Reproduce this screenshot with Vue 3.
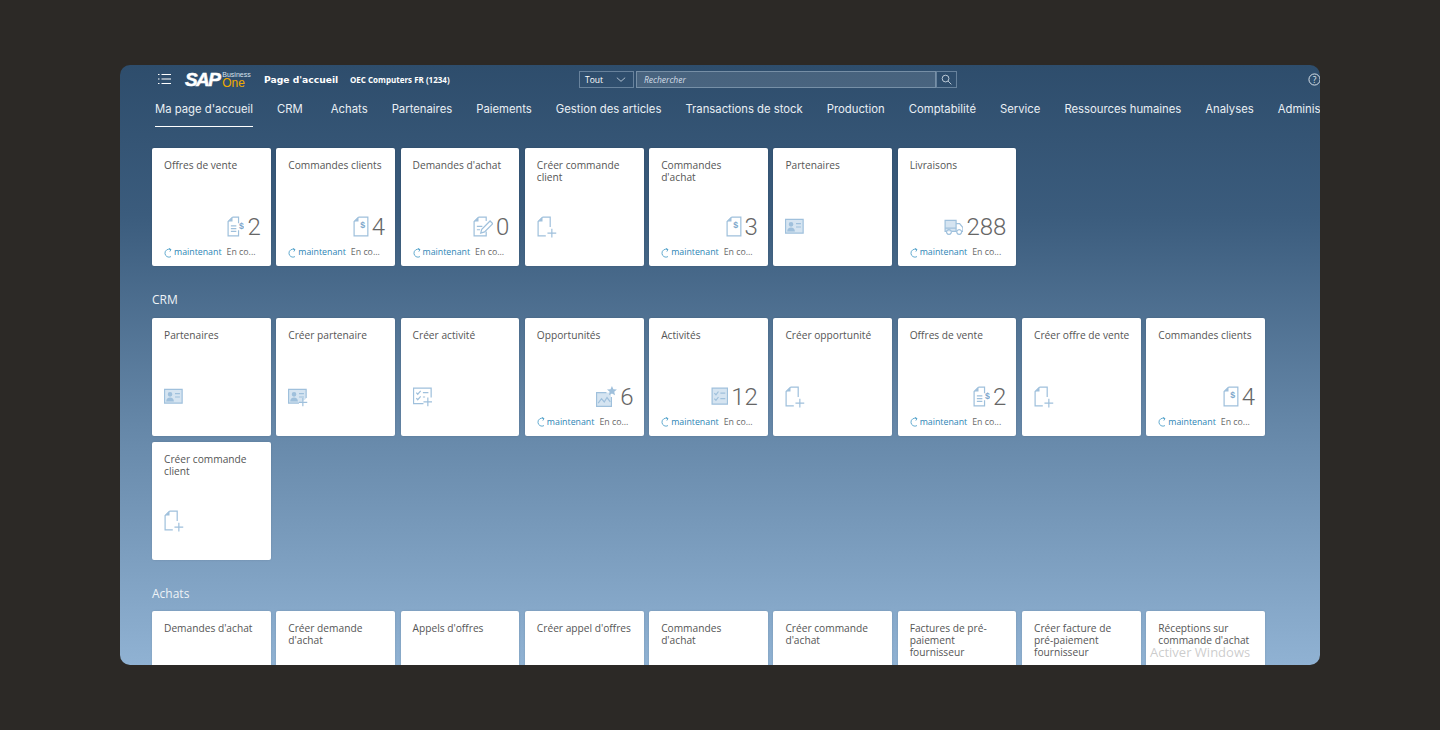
<script setup>
const navItems = [
  "Ma page d'accueil", 'CRM', 'Achats', 'Partenaires', 'Paiements', 'Gestion des articles',
  'Transactions de stock', 'Production', 'Comptabilité', 'Service', 'Ressources humaines',
  'Analyses', 'Administration',
]

// tile icons in a 20 high box: w = box width, b = pale background, f = solid parts, s = outlines, t = $ position
const icons = {
  quote: {
    w: 15.500,
    s: ['M5 1h5.500v5.500M10.500 13v5H1V5L5 1', 'M3.500 9h5M3.500 11.500h5M3.500 14h5'],
    f: ['M5 1v4H1z'],
    t: [11, 11.500],
  },
  order: {
    w: 14,
    s: ['M5 1h8.500v17H1V5L5 1'],
    f: ['M5 1v4H1z'],
    t: [6.500, 10.500],
  },
  request: {
    w: 18.500,
    s: ['M5 1h7v3.500M12 14v4H1V5L5 1', 'M3.500 9.500h5M3.500 12.500h3', 'M7 15.500l1-3.500 7.500-7.500 2.500 2.500-7.500 7.500z'],
    f: ['M5 1v4H1z'],
  },
  create: {
    w: 18,
    s: ['M5 1h7v9M8 18H1V5L5 1', 'M13.500 11.500v8M9.500 15.500h8'],
    f: ['M5 1v4H1z'],
  },
  card: {
    w: 17,
    b: ['M.5 3h16v12.500H.5z'],
    s: ['M.5 3h16v12.500H.5z', 'M10 7h4.500M10 10h4.500'],
    f: ['M5.500 5.500a2 2 0 0 1 0 4.200a2 2 0 0 1 0-4.200zM2 14c0-2 1.500-3.500 3.500-3.500S9 12 9 14z'],
  },
  cardAdd: {
    w: 18,
    b: ['M.5 3h16v8.500l-5.500 4H.5z'],
    s: ['M10 15.500H.5V3h16v8', 'M10 7h4.500M10 10h4.500', 'M13.500 11v7.500M10 14.800h7.500'],
    f: ['M5.500 5.500a2 2 0 0 1 0 4.200a2 2 0 0 1 0-4.200zM2 14c0-2 1.500-3.500 3.500-3.500S9 12 9 14z'],
  },
  taskAdd: {
    w: 18,
    s: ['M9.500 16H.5V2h16v8.500', 'M9 6h5M9 10h2', 'M3 6l1.300 1.500L7 4.500M3 11l1.300 1.500L7 9.500', 'M13.500 10.500v8M9.500 14.500h8'],
  },
  chart: {
    w: 19,
    b: ['M.5 6h13v12.500H.5z'],
    s: ['M9.500 6H.5v12.500h13.500V10', 'M2 15.500l3-4 2.500 3 2.500-4 3 4'],
    f: ['M14.500 0l1.300 2.900 3.200.3-2.400 2.100.7 3.100-2.800-1.600-2.800 1.600.7-3.100-2.400-2.100 3.200-.3z'],
  },
  tasks: {
    w: 16,
    b: ['M1 2h14v14.500H1z'],
    s: ['M1 2h14v14.500H1z', 'M8.500 6.500h4.500M8.500 11.500h4.500', 'M3 6.500l1.500 1.500 2.300-3M3 11.500l1.500 1.500 2.300-3'],
  },
  truck: {
    w: 18,
    b: ['M1 4h10v10H1z'],
    s: ['M2 14H1V4h10v10H7', 'M11 7h3.200l3 3.500V14h-1M11 14h.5', 'M1 11h10', 'M4.500 12.300a2.200 2.200 0 1 0 .01 0zM13.800 12.300a2.200 2.200 0 1 0 .01 0z'],
  },
}

const home = [
  { title: 'Offres de vente', icon: 'quote', value: 2 },
  { title: 'Commandes clients', icon: 'order', value: 4 },
  { title: "Demandes d'achat", icon: 'request', value: 0 },
  { title: 'Créer commande client', icon: 'create' },
  { title: "Commandes d'achat", icon: 'order', value: 3 },
  { title: 'Partenaires', icon: 'card' },
  { title: 'Livraisons', icon: 'truck', value: 288 },
]

const crm = [
  { title: 'Partenaires', icon: 'card' },
  { title: 'Créer partenaire', icon: 'cardAdd' },
  { title: 'Créer activité', icon: 'taskAdd' },
  { title: 'Opportunités', icon: 'chart', value: 6 },
  { title: 'Activités', icon: 'tasks', value: 12 },
  { title: 'Créer opportunité', icon: 'create' },
  { title: 'Offres de vente', icon: 'quote', value: 2 },
  { title: 'Créer offre de vente', icon: 'create' },
  { title: 'Commandes clients', icon: 'order', value: 4 },
  { title: 'Créer commande client', icon: 'create' },
]

const achats = [
  { title: "Demandes d'achat" },
  { title: "Créer demande d'achat" },
  { title: "Appels d'offres" },
  { title: "Créer appel d'offres" },
  { title: "Commandes d'achat" },
  { title: "Créer commande d'achat" },
  { title: 'Factures de pré-paiement fournisseur' },
  { title: 'Créer facture de pré-paiement fournisseur' },
  { title: "Réceptions sur commande d'achat" },
]

const sections = [
  { name: '', tiles: home },
  { name: 'CRM', tiles: crm },
  { name: 'Achats', tiles: achats },
]
</script>

<template>
  <div class="frame">
    <header class="topbar">
      <svg class="menu-icon" viewBox="0 0 14 12">
        <path d="M0 1.500h1.500M0 6h1.500M0 10.500h1.500M3.500 1.500H13M3.500 6H13M3.500 10.500H13" />
      </svg>
      <div class="logo">
        <span class="logo-sap">SAP</span>
        <span class="logo-product"><small>Business</small><b>One</b></span>
      </div>
      <span class="page-title">Page d'accueil</span>
      <span class="company">OEC Computers FR (1234)</span>
      <div class="search">
        <div class="scope">
          <span>Tout</span>
          <svg viewBox="0 0 12 6"><path d="M1 .8l5 4.400 5-4.400" /></svg>
        </div>
        <div class="search-input">Rechercher</div>
        <div class="search-btn">
          <svg viewBox="0 0 14 14"><circle cx="5.800" cy="5.800" r="4.300" /><path d="M9 9l4.200 4.200" /></svg>
        </div>
      </div>
      <svg class="help" viewBox="0 0 14 14">
        <circle cx="7" cy="7" r="6" />
        <text x="7" y="10.300" text-anchor="middle">?</text>
      </svg>
    </header>

    <nav class="nav">
      <a v-for="(item, i) in navItems" :key="item" :class="{ active: i === 0 }">{{ item }}</a>
    </nav>

    <main class="content">
      <section v-for="section in sections" :key="section.name" class="section">
        <h2 v-if="section.name">{{ section.name }}</h2>
        <div class="tiles">
          <div v-for="tile in section.tiles" :key="tile.title" class="tile">
            <div class="tile-title">{{ tile.title }}</div>
            <div v-if="tile.icon" class="tile-body" :class="{ kpi: tile.value !== undefined }">
              <svg
                class="tile-icon"
                :viewBox="`0 0 ${icons[tile.icon].w} 20`"
                :style="{ width: icons[tile.icon].w * 1.1 + 'px' }"
              >
                <path v-for="d in icons[tile.icon].b" :key="d" class="pale" :d="d" />
                <path v-for="d in icons[tile.icon].f" :key="d" class="solid" :d="d" />
                <path v-for="d in icons[tile.icon].s" :key="d" :d="d" />
                <text v-if="icons[tile.icon].t" :x="icons[tile.icon].t[0]" :y="icons[tile.icon].t[1]">$</text>
              </svg>
              <span v-if="tile.value !== undefined" class="tile-value">{{ tile.value }}</span>
            </div>
            <div v-if="tile.value !== undefined" class="tile-foot">
              <svg viewBox="0 0 10 10"><path d="M7.800 1.600A4 4 0 1 0 8 8.600M6 .4l2 1.200-1.200 2" /></svg>
              <span class="now">maintenant</span>
              <span class="status">En co...</span>
            </div>
          </div>
        </div>
      </section>
    </main>

    <div class="watermark">
      <div>Activer Windows</div>
      <small>Accédez aux paramètres</small>
    </div>
  </div>
</template>

<style>
html,
body {
  margin: 0;
  background: #2c2926;
}
</style>

<style scoped>
.frame {
  position: relative;
  width: 1200px;
  height: 600px;
  margin: 65px 120px;
  border-radius: 10px;
  overflow: hidden;
  background: linear-gradient(#2e4d6c 0%, #3b5c7d 25%, #6587a8 60%, #90b2d3 100%);
  font-family: 'Open Sans', 'Noto Sans', sans-serif;
  color: #fff;
}

.topbar {
  display: flex;
  align-items: center;
  height: 28px;
  padding-left: 38px;
}

.menu-icon {
  width: 14px;
  height: 12px;
  fill: none;
  stroke: #fff;
  stroke-width: 1.2;
}

.logo {
  display: flex;
  align-items: center;
  margin-left: 13px;
  width: 79px;
}

.logo-sap {
  font: italic bold 19px/1 'Liberation Sans', sans-serif;
  letter-spacing: -1.600px;
  -webkit-text-stroke: 0.5px #fff;
}

.logo-product {
  display: flex;
  flex-direction: column;
  margin-left: 3px;
  line-height: 1;
}

.logo-product small {
  font: 7px/7px 'Liberation Sans', sans-serif;
  color: #d8e2ec;
}

.logo-product b {
  font: 12px/10px 'Liberation Sans', sans-serif;
  color: #f0ab00;
}

.page-title {
  font-family: 'DejaVu Sans', sans-serif;
  font-size: 9.200px;
  font-weight: 700;
  width: 86px;
  white-space: nowrap;
}

.company {
  font-size: 8px;
  font-weight: 700;
  width: 229px;
  white-space: nowrap;
}

.search {
  display: flex;
  height: 17px;
  font-size: 8.500px;
}

.scope,
.search-input,
.search-btn {
  display: flex;
  align-items: center;
  box-sizing: border-box;
  border: 1px solid rgba(190, 210, 228, 0.4);
}

.scope {
  width: 55px;
  justify-content: space-between;
  padding: 0 7px 0 5px;
}

.scope svg {
  width: 10px;
  height: 5px;
  fill: none;
  stroke: #c9d6e2;
}

.search-input {
  width: 300px;
  margin-left: 2px;
  padding-left: 7px;
  background: rgba(255, 255, 255, 0.12);
  font-style: italic;
  color: #d4dee8;
}

.search-btn {
  width: 21px;
  justify-content: center;
}

.search-btn svg {
  width: 11px;
  height: 11px;
  fill: none;
  stroke: #dfe8f0;
}

.help {
  width: 13px;
  height: 13px;
  margin-left: auto;
  margin-right: -1px;
  fill: none;
  stroke: #e6edf3;
  stroke-width: 1;
}

.help text {
  fill: #e6edf3;
  stroke: none;
  font-size: 9px;
}

.nav {
  display: flex;
  gap: 24px;
  padding-left: 35px;
  height: 34px;
  white-space: nowrap;
}

.nav a {
  box-sizing: border-box;
  height: 34px;
  padding-top: 9px;
  font-family: Inter, sans-serif;
  font-size: 11.300px;
  color: #e9eff4;
}

.nav a:nth-child(2) {
  margin-right: 4px;
}

.nav a.active {
  border-bottom: 1.500px solid #fff;
}

.content {
  padding: 21px 0 0 32px;
}

.section {
  margin-bottom: 25px;
}

.section h2 {
  margin: 0 0 9.500px;
  font-size: 12px;
  line-height: 17px;
  font-weight: 400;
  color: #eef3f7;
}

.tiles {
  display: grid;
  grid-template-columns: repeat(9, 118.700px);
  gap: 6px 5.600px;
}

.tile {
  display: flex;
  flex-direction: column;
  position: relative;
  box-sizing: border-box;
  height: 118px;
  padding: 11px 10px 0 12px;
  border-radius: 2px;
  background: #fff;
  box-shadow: 0 0 2px rgba(0, 0, 0, 0.15);
}

.tile-title {
  font-size: 10.200px;
  line-height: 12px;
  color: #555;
}

.tile-body {
  position: absolute;
  left: 12px;
  right: 10px;
  top: 65px;
  display: flex;
  align-items: center;
  height: 28px;
}

.tile-body.kpi {
  justify-content: flex-end;
}

.tile-icon {
  height: 22px;
  fill: none;
  stroke: #9fc0dc;
  stroke-width: 1.100;
}

.tile-icon .solid {
  fill: #9fc0dc;
  stroke: none;
}

.tile-icon .pale {
  fill: #d5e4f1;
  stroke: none;
}

.tile-icon text {
  fill: #7da7cc;
  stroke: none;
  font-family: 'Liberation Sans', sans-serif;
  font-size: 8px;
  font-weight: 700;
}

.tile-value {
  margin-left: 3px;
  font-family: Roboto, sans-serif;
  font-size: 24px;
  font-weight: 300;
  line-height: 28px;
  color: #666;
}

.tile-foot {
  position: absolute;
  left: 11px;
  top: 98px;
  display: flex;
  align-items: center;
  font-size: 8.800px;
  line-height: 13px;
  white-space: nowrap;
}

.tile-foot svg {
  width: 10px;
  height: 10px;
  margin-right: 1px;
  fill: none;
  stroke: #3f97c4;
  stroke-width: 0.800;
}

.now {
  color: #2c85b5;
}

.status {
  margin-left: 5px;
  color: #6a6a6a;
}

.watermark {
  position: absolute;
  left: 1030px;
  top: 579px;
  font-family: 'Open Sans', sans-serif;
  font-size: 13px;
  line-height: 17px;
  color: rgba(170, 170, 170, 0.6);
  white-space: nowrap;
}

.watermark small {
  display: block;
  margin-top: 3px;
  font-size: 9px;
}
</style>
